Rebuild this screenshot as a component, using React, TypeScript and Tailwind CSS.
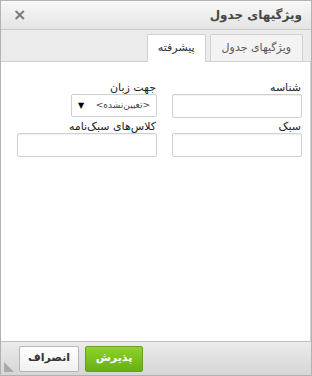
import React from 'react';

function Field({ label, wide = true, children }: { label: string; wide?: boolean; children?: React.ReactNode }) {
  return (
    <div className="flex flex-col items-stretch">
      <label className="text-[11px] leading-[11px] text-[#222] mb-[1px] pr-[1px]">{label}</label>
      {children ?? (
        <input
          className={`h-[24px] ${wide ? 'w-[130px]' : 'w-[140px]'} border border-[#d0d0d0] rounded-[2px] bg-white shadow-[inset_0_1px_1px_rgba(0,0,0,0.06)] outline-none`}
        />
      )}
    </div>
  );
}

export default function App() {
  return (
    <div
      dir="rtl"
      className="w-[312px] h-[376px] flex flex-col bg-white border border-[#b2b2b2] overflow-hidden"
      style={{ fontFamily: '"DejaVu Sans", sans-serif' }}
    >
      {/* title */}
      <div className="h-[29px] shrink-0 flex items-center justify-between px-[9px] bg-gradient-to-b from-[#f8f8f8] to-[#e4e4e4] border-b border-[#c9c9c9]">
        <span className="text-[12px] font-bold text-[#474747]">ویژگیهای جدول</span>
        <span className="text-[16px] font-black text-[#777] leading-none ml-[3px]">×</span>
      </div>

      {/* tabs */}
      <div className="h-[32px] shrink-0 bg-[#ebebeb] border-b border-[#d1d1d1] flex items-end pr-[8px] gap-[4px]">
        <div className="h-[27px] px-[11px] flex items-center text-[11px] text-[#595959] bg-[#f3f3f3] border border-b-0 border-[#d1d1d1] rounded-t-[2px]">
          ویژگیهای جدول
        </div>
        <div className="h-[28px] -mb-px px-[10px] flex items-center text-[11px] text-[#333] bg-white border border-b-0 border-[#d1d1d1] rounded-t-[2px]">
          پیشرفته
        </div>
      </div>

      {/* body */}
      <div className="flex-1 bg-white border-r border-[#d4d4d4] pt-[20px] pr-[8px]">
        <div className="flex gap-[15px]">
          <Field label="شناسه" />
          <Field label="جهت زبان">
            <div className="h-[23px] w-[86px] border border-[#d0d0d0] rounded-[2px] bg-white flex items-center justify-between px-[6px] text-[9px] text-[#444]">
              <span>&lt;تعیین‌نشده&gt;</span>
              <span className="text-[8px] text-black">▼</span>
            </div>
          </Field>
        </div>
        <div className="flex gap-[15px] mt-[3px]">
          <Field label="سبک" />
          <Field label="کلاس‌های سبک‌نامه" wide={false} />
        </div>
      </div>

      {/* footer */}
      <div className="h-[34px] shrink-0 border-t border-[#bfbfbf] bg-gradient-to-b from-[#ebebeb] to-[#d6d6d6] flex items-center pr-[168px] gap-[6px] relative">
        <button className="h-[26px] w-[58px] rounded-[2px] border border-[#6a9e1e] bg-gradient-to-b from-[#8fd22a] to-[#67b014] text-white text-[11px] font-bold">
          پذیرش
        </button>
        <button className="h-[26px] w-[60px] rounded-[2px] border border-[#b6b6b6] bg-gradient-to-b from-white to-[#f0f0f0] text-[#333] text-[11px] font-bold">
          انصراف
        </button>
        <div className="absolute left-[3px] bottom-[3px] w-0 h-0 border-t-[10px] border-t-transparent border-l-[10px] border-l-[#aaa]" />
      </div>
    </div>
  );
}
